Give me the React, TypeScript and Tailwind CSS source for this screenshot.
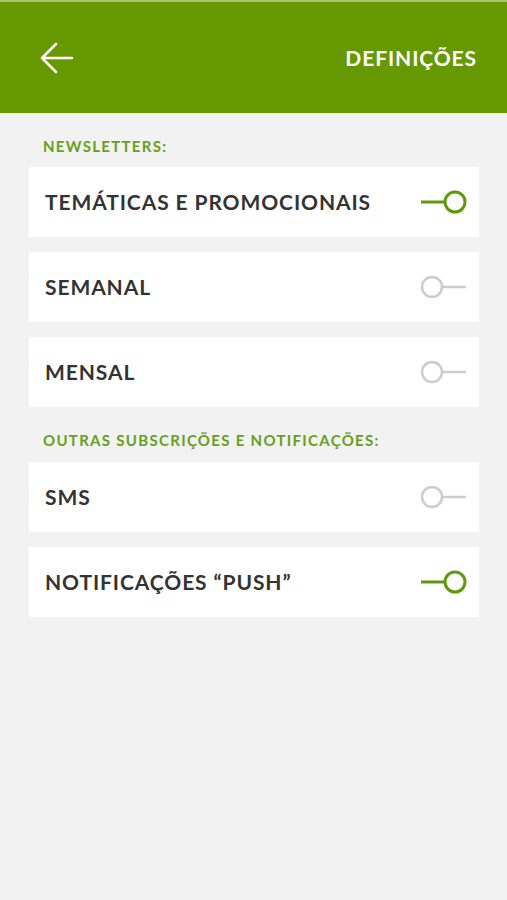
const ToggleOn = () => (
  <svg width="48" height="26" viewBox="0 0 48 26" className="shrink-0">
    <line x1="0" y1="13" x2="24" y2="13" stroke="#5f9a0e" strokeWidth="3" />
    <circle cx="34" cy="13" r="10" fill="none" stroke="#5f9a0e" strokeWidth="3" />
  </svg>
);

const ToggleOff = () => (
  <svg width="48" height="26" viewBox="0 0 48 26" className="shrink-0">
    <circle cx="11" cy="13" r="10" fill="none" stroke="#cccccc" strokeWidth="2.5" />
    <line x1="21" y1="13" x2="45" y2="13" stroke="#cccccc" strokeWidth="2.5" />
  </svg>
);

function Row({ label, on }: { label: string; on: boolean }) {
  return (
    <div className="flex h-[70px] items-center justify-between bg-white pl-4 pr-[10px]">
      <span className="text-[21px] font-bold tracking-[0.9px] text-[#333333]">{label}</span>
      {on ? <ToggleOn /> : <ToggleOff />}
    </div>
  );
}

export default function App() {
  return (
    <div
      className="min-h-[900px] w-full bg-[#f2f2f2]"
      style={{ fontFamily: "Lato, 'Noto Sans', sans-serif" }}
    >
      <div className="h-[2px] bg-[#a8c46f]" />
      <div className="flex h-[111px] items-center justify-between bg-[#669900] pl-[40px] pr-[30px]">
        <svg width="34" height="34" viewBox="0 0 34 34">
          <path d="M32 17H3M16 3L2 17l14 14" fill="none" stroke="white" strokeWidth="2.5" strokeLinecap="round" strokeLinejoin="round" />
        </svg>
        <span className="text-[21px] font-bold tracking-[0.9px] text-white">DEFINIÇÕES</span>
      </div>
      <div className="flex flex-col px-[29px] pr-[28px]">
        <div className="pb-[9px] pl-[14px] pt-[22px] text-[15px] font-bold tracking-[1.3px] text-[#66a01c]">
          NEWSLETTERS:
        </div>
        <div className="flex flex-col gap-[15px]">
          <Row label="TEMÁTICAS E PROMOCIONAIS" on />
          <Row label="SEMANAL" on={false} />
          <Row label="MENSAL" on={false} />
        </div>
        <div className="pb-[11px] pl-[14px] pt-[22px] text-[15px] font-bold tracking-[1.3px] text-[#66a01c]">
          OUTRAS SUBSCRIÇÕES E NOTIFICAÇÕES:
        </div>
        <div className="flex flex-col gap-[15px]">
          <Row label="SMS" on={false} />
          <Row label="NOTIFICAÇÕES “PUSH”" on />
        </div>
      </div>
    </div>
  );
}
